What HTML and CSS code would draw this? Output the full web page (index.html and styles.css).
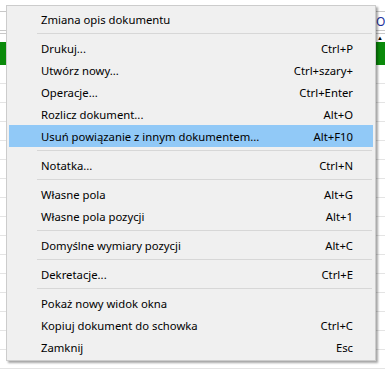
FILE: index.html
```html
<!DOCTYPE html>
<html lang="pl">
<head>
  <meta charset="UTF-8" />
  <meta name="viewport" content="width=device-width, initial-scale=1.0" />
  <title>Menu dokumentu</title>
  <link rel="stylesheet" href="styles.css">
</head>
<body>
  <!-- Document grid behind the context menu -->
  <div class="sheet">
    <div class="head">
      <div class="head-top"></div>
      <div class="head-mid"><span class="col-title">Od</span></div>
      <div class="head-thin"></div>
      <div class="head-low"><span class="sort-mark">&#9650;</span></div>
    </div>
    <div class="band"></div>
    <div class="row"></div>
    <div class="row"></div>
    <div class="row"></div>
    <div class="row"></div>
    <div class="row"></div>
    <div class="row"></div>
    <div class="row"></div>
    <div class="row"></div>
    <div class="row"></div>
    <div class="row"></div>
    <div class="row"></div>
    <div class="row"></div>
    <div class="row"></div>
    <div class="row"></div>
    <div class="row"></div>
    <div class="row"></div>
  </div>

  <!-- Context menu -->
  <div class="menu">
    <div class="item"><span>Zmiana opis dokumentu</span></div>
    <div class="sep"></div>
    <div class="item"><span>Drukuj...</span><span class="key">Ctrl+P</span></div>
    <div class="item"><span>Utwórz nowy...</span><span class="key">Ctrl+szary+</span></div>
    <div class="item"><span>Operacje...</span><span class="key">Ctrl+Enter</span></div>
    <div class="item"><span>Rozlicz dokument...</span><span class="key">Alt+O</span></div>
    <div class="item active"><span>Usuń powiązanie z innym dokumentem...</span><span class="key">Alt+F10</span></div>
    <div class="sep"></div>
    <div class="item"><span>Notatka...</span><span class="key">Ctrl+N</span></div>
    <div class="sep"></div>
    <div class="item"><span>Własne pola</span><span class="key">Alt+G</span></div>
    <div class="item"><span>Własne pola pozycji</span><span class="key">Alt+1</span></div>
    <div class="sep"></div>
    <div class="item"><span>Domyślne wymiary pozycji</span><span class="key">Alt+C</span></div>
    <div class="sep"></div>
    <div class="item"><span>Dekretacje...</span><span class="key">Ctrl+E</span></div>
    <div class="sep"></div>
    <div class="item"><span>Pokaż nowy widok okna</span></div>
    <div class="item"><span>Kopiuj dokument do schowka</span><span class="key">Ctrl+C</span></div>
    <div class="item"><span>Zamknij</span><span class="key">Esc</span></div>
  </div>
</body>
</html>
```

FILE: styles.css
```css
* {
  margin: 0;
  padding: 0;
  box-sizing: border-box;
}

body {
  font-family: 'Noto Sans', sans-serif;
  background-color: #fff;
  color: #000;
  position: relative;
  width: 385px;
  height: 373px;
  overflow: hidden;
}

/* Grid behind the menu */
.sheet {
  display: flex;
  flex-direction: column;
}

.head {
  height: 42px;
  display: flex;
  flex-direction: column;
}
.head-top {
  height: 12px;
  border-bottom: 1px solid #c8c8c8;
}
.head-mid {
  height: 19px;
  border-bottom: 1px solid #c8c8c8;
  display: flex;
  justify-content: flex-end;
  align-items: center;
}
.head-thin {
  height: 3px;
  border-bottom: 1px solid #c8c8c8;
}
.head-low {
  flex: 1;
  display: flex;
  justify-content: flex-end;
  align-items: center;
}

.col-title {
  font-size: 12px;
  color: #1b2f9b;
  width: 9px;
  overflow: hidden;
  white-space: nowrap;
}
.sort-mark {
  font-size: 6px;
  width: 8px;
}

.band {
  height: 23px;
  background-color: #0a8a0a;
}

.row {
  height: 19px;
  border-bottom: 1px solid #e4e4e4;
}

/* Context menu */
.menu {
  position: absolute;
  top: 5px;
  left: 6px;
  width: 370px;
  background-color: #f0f0f0;
  border: 1px solid #cccccc;
  padding: 2px;
  box-shadow: 2px 2px 2px rgba(0, 0, 0, 0.35);
  font-size: 11.3px;
}

.item {
  height: 22px;
  display: flex;
  align-items: center;
  justify-content: space-between;
  padding: 0 20px 0 32px;
  white-space: nowrap;
}
.item.active {
  background-color: #91c9f7;
}

.sep {
  height: 1px;
  margin: 3px 1px 3px 28px;
  background-color: #d7d7d7;
}
```
